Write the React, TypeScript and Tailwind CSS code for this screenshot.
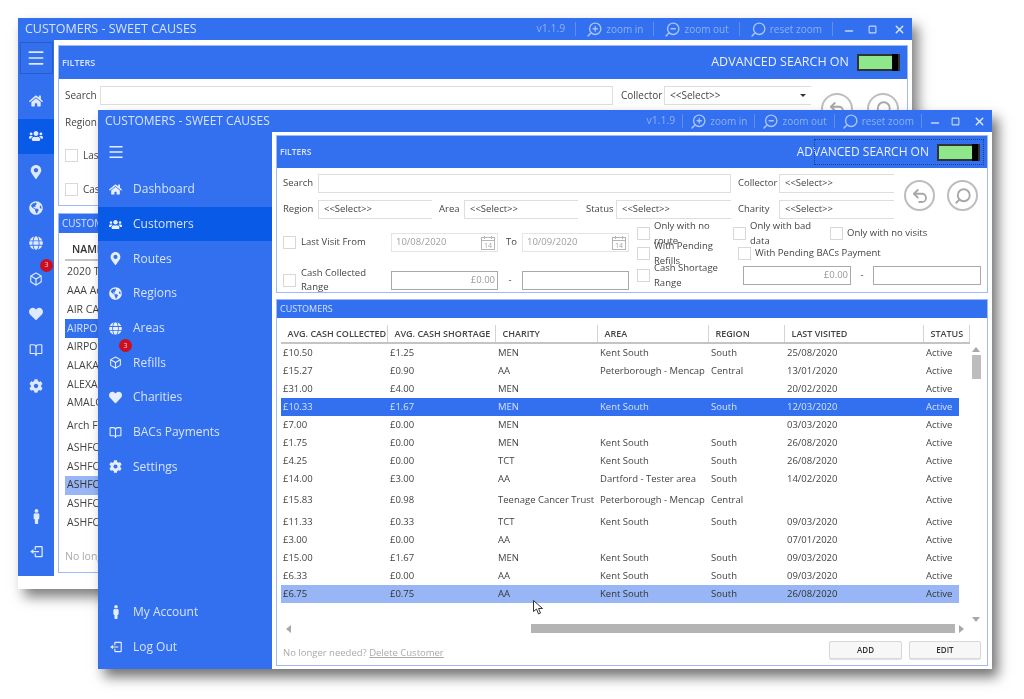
import type { ReactNode } from 'react';
import { Menu, Minus, Search, Square, Undo2, X, ZoomIn, ZoomOut, Box, BookOpen } from 'lucide-react';
import { FaCog, FaGlobe, FaGlobeAmericas, FaHeart, FaHome, FaMale, FaMapMarkerAlt, FaUsers } from 'react-icons/fa';
import { BiLogOut } from 'react-icons/bi';
import type { IconType } from 'react-icons';

const FONT = 'font-["Open_Sans",sans-serif]';

const NAV: { label: string; icon: IconType | typeof Box; active?: boolean; badge?: boolean }[] = [
  { label: 'Dashboard', icon: FaHome },
  { label: 'Customers', icon: FaUsers, active: true },
  { label: 'Routes', icon: FaMapMarkerAlt },
  { label: 'Regions', icon: FaGlobeAmericas },
  { label: 'Areas', icon: FaGlobe },
  { label: 'Refills', icon: Box, badge: true },
  { label: 'Charities', icon: FaHeart },
  { label: 'BACs Payments', icon: BookOpen },
  { label: 'Settings', icon: FaCog },
];

const NAV_BOTTOM = [
  { label: 'My Account', icon: FaMale },
  { label: 'Log Out', icon: BiLogOut },
];

const ROWS = [
  { h: 'h-[18px]', c: ['£10.50', '£1.25', 'MEN', 'Kent South', 'South', '25/08/2020', 'Active'] },
  { h: 'h-[18px]', c: ['£15.27', '£0.90', 'AA', 'Peterborough - Mencap', 'Central', '13/01/2020', 'Active'] },
  { h: 'h-[18px]', c: ['£31.00', '£4.00', 'MEN', '', '', '20/02/2020', 'Active'] },
  { h: 'h-[18px]', sel: 'dark', c: ['£10.33', '£1.67', 'MEN', 'Kent South', 'South', '12/03/2020', 'Active'] },
  { h: 'h-[18px]', c: ['£7.00', '£0.00', 'MEN', '', '', '03/03/2020', 'Active'] },
  { h: 'h-[18px]', c: ['£1.75', '£0.00', 'MEN', 'Kent South', 'South', '26/08/2020', 'Active'] },
  { h: 'h-[18px]', c: ['£4.25', '£0.00', 'TCT', 'Kent South', 'South', '26/08/2020', 'Active'] },
  { h: 'h-[18px]', c: ['£14.00', '£3.00', 'AA', 'Dartford - Tester area', 'South', '14/02/2020', 'Active'] },
  { h: 'h-[25px]', c: ['£15.83', '£0.98', 'Teenage Cancer Trust', 'Peterborough - Mencap', 'Central', '', 'Active'] },
  { h: 'h-[18px]', c: ['£11.33', '£0.33', 'TCT', 'Kent South', 'South', '09/03/2020', 'Active'] },
  { h: 'h-[18px]', c: ['£3.00', '£0.00', 'AA', '', '', '07/01/2020', 'Active'] },
  { h: 'h-[18px]', c: ['£15.00', '£1.67', 'MEN', 'Kent South', 'South', '09/03/2020', 'Active'] },
  { h: 'h-[18px]', c: ['£6.33', '£0.00', 'AA', 'Kent South', 'South', '09/03/2020', 'Active'] },
  { h: 'h-[18px]', sel: 'light', c: ['£6.75', '£0.75', 'AA', 'Kent South', 'South', '26/08/2020', 'Active'] },
];

const HEADERS = [
  { label: 'AVG. CASH COLLECTED', w: 'w-[107px]' },
  { label: 'AVG. CASH SHORTAGE', w: 'w-[108px]' },
  { label: 'CHARITY', w: 'w-[102px]' },
  { label: 'AREA', w: 'w-[111px]' },
  { label: 'REGION', w: 'w-[76px]' },
  { label: 'LAST VISITED', w: 'w-[139px]' },
  { label: 'STATUS', w: 'w-[46px]' },
];

const BACK_NAMES = [
  { name: '2020 TEST', h: 'h-[18.7px]' },
  { name: 'AAA Accounts', h: 'h-[18.7px]' },
  { name: 'AIR CANADA', h: 'h-[18.7px]' },
  { name: 'AIRPORT ONE', h: 'h-[18.7px]', sel: 'dark' },
  { name: 'AIRPORT TWO', h: 'h-[18.7px]' },
  { name: 'ALAKAZAM', h: 'h-[18.7px]' },
  { name: 'ALEXANDER', h: 'h-[18.7px]' },
  { name: 'AMALGAM', h: 'h-[18.7px]' },
  { name: 'Arch Fencing', h: 'h-[26px]' },
  { name: 'ASHFORD A', h: 'h-[18.7px]' },
  { name: 'ASHFORD B', h: 'h-[18.7px]' },
  { name: 'ASHFORD C', h: 'h-[18.7px]', sel: 'light' },
  { name: 'ASHFORD D', h: 'h-[18.7px]' },
  { name: 'ASHFORD E', h: 'h-[18.7px]' },
];

function Sep() {
  return <span className="h-[14px] w-px bg-[#5f8ff2]" />;
}

function ToolButton({ icon, label }: { icon: ReactNode; label: string }) {
  return (
    <span className="flex items-center gap-[3px]">
      {icon}
      <span>{label}</span>
    </span>
  );
}

function TitleBar({ gap, text }: { gap: string; text: string }) {
  const icon = 'size-[17px] -scale-x-100 text-[#a8c3f9]';
  return (
    <div className="flex h-[22px] shrink-0 items-center bg-[#3370f0] pl-[7px] pr-[6px]">
      <span className={`${text} text-[#d5e3fe]`}>CUSTOMERS - SWEET CAUSES</span>
      <div className={`ml-auto flex items-center ${gap} text-[10px] text-[#8fb0f2]`}>
        <span className="text-[10.5px]">v1.1.9</span>
        <Sep />
        <ToolButton icon={<ZoomIn className={icon} strokeWidth={2} />} label="zoom in" />
        <Sep />
        <ToolButton icon={<ZoomOut className={icon} strokeWidth={2} />} label="zoom out" />
        <Sep />
        <ToolButton icon={<Search className={icon} strokeWidth={2} />} label="reset zoom" />
        <Sep />
        <Minus className="size-[12px] translate-y-[2px] text-[#c4d6fb]" strokeWidth={3} />
        <Square className="ml-[3px] size-[9px] text-[#c4d6fb]" strokeWidth={3} />
        <X className="ml-[6px] size-[13px] text-[#dbe7ff]" strokeWidth={2.5} />
      </div>
    </div>
  );
}

function Toggle() {
  return (
    <span className="flex h-[17px] w-[43px] items-center justify-end border-2 border-[#333] bg-[#8ee88b]">
      <span className="h-[17px] w-[6px] shrink-0 bg-black" />
    </span>
  );
}

function Check() {
  return <span className="size-[13px] shrink-0 border border-[#d8d8d8] bg-white" />;
}

function Field({ w, text, right, dim, strong }: { w: string; text?: string; right?: boolean; dim?: boolean; strong?: boolean }) {
  return (
    <span
      className={`flex h-[19px] shrink-0 items-center border px-[5px] ${w} ${strong ? 'border-[#a9a9a9]' : 'border-[#dedede]'} ${right ? 'justify-end pr-[2px]' : ''} ${dim ? 'text-[#9a9a9a]' : 'text-[#555]'}`}
    >
      {text}
    </span>
  );
}

function Select({ w }: { w: string }) {
  return (
    <span className={`flex h-[19px] shrink-0 items-center border border-r-0 border-[#dedede] px-[5px] text-[#444] ${w}`}>
      {'<<Select>>'}
    </span>
  );
}

function DateField({ value }: { value: string }) {
  return (
    <span className="flex h-[19px] w-[107px] shrink-0 items-center justify-between border border-[#e4e4e4] pl-[4px] pr-[2px] text-[#a0a0a0]">
      {value}
      <svg viewBox="0 0 14 14" className="size-[14px]" fill="none" stroke="#b5b5b5">
        <rect x="0.5" y="1.5" width="13" height="12" />
        <path d="M0.5 4.5h13M3.5 0v3M10.5 0v3" />
        <text x="7" y="12" fontSize="7" textAnchor="middle" fill="#a5a5a5" stroke="none">
          14
        </text>
      </svg>
    </span>
  );
}

function RoundButton({ size, children }: { size: string; children: ReactNode }) {
  return (
    <span className={`flex shrink-0 items-center justify-center rounded-full border-2 border-[#bdbdbd] bg-white text-[#a8a8a8] ${size}`}>
      {children}
    </span>
  );
}

function Arrow({ points }: { points: string }) {
  return (
    <svg viewBox="0 0 8 8" className="size-[8px] shrink-0" fill="#a8a8a8">
      <polygon points={points} />
    </svg>
  );
}

function BackWindow() {
  return (
    <div className="absolute left-[18px] top-[18px] flex h-[571px] w-[894px] flex-col bg-white shadow-[6px_8px_12px_rgba(0,0,0,0.5)]">
      <TitleBar gap="gap-[10px]" text="text-[12.5px]" />
      <div className="flex h-[536px]">
        <aside className="relative flex w-[36px] shrink-0 flex-col items-center bg-[#3370f0] text-[#dfe9ff]">
          <div className="mt-[2px] flex h-[32px] w-[33px] items-center justify-center border border-[#2a5cc4]">
            <Menu className="size-[20px]" strokeWidth={2} />
          </div>
          <div className="mt-[9px] flex w-full flex-col">
            {NAV.map(({ label, icon: Icon, active, badge }) => (
              <span key={label} className={`relative flex h-[35.6px] items-center justify-center ${active ? 'bg-[#0a5ae8]' : ''}`}>
                <Icon className="size-[14px]" />
                {badge && (
                  <span className="absolute left-[22px] top-[-2px] flex size-[13px] items-center justify-center rounded-full bg-[#cc0f1e] text-[7px] text-[#f5c8c8]">
                    3
                  </span>
                )}
              </span>
            ))}
          </div>
          <div className="mt-auto mb-[7px] flex w-full flex-col">
            {NAV_BOTTOM.map(({ label, icon: Icon }) => (
              <span key={label} className="flex h-[35px] items-center justify-center">
                <Icon className="size-[15px]" />
              </span>
            ))}
          </div>
        </aside>
        <div className="flex flex-1 flex-col gap-[7px] pl-[4px] pr-[4px] pt-[5px]">
          <section className="h-[161px] border border-[#9dbaf7]">
            <div className="flex h-[33px] items-center bg-[#3370f0] pl-[3px] pr-[7px]">
              <span className="text-[9px] font-semibold text-[#d5e3fe]">FILTERS</span>
              <span className="ml-auto text-[12.5px] text-[#eaf1ff]">ADVANCED SEARCH ON</span>
              <span className="ml-[8px]">
                <Toggle />
              </span>
            </div>
            <div className="flex pl-[6px] pt-[7px] text-[10px] text-[#444]">
              <div className="flex w-[746px] flex-col gap-[8px]">
                <div className="flex items-center">
                  <span className="w-[35px]">Search</span>
                  <Field w="w-[513px]" />
                  <span className="ml-[8px] w-[43px]">Collector</span>
                  <span className="relative">
                    <Select w="w-[147px]" />
                    <span className="absolute right-[5px] top-[8px] size-0 border-x-[3px] border-t-[3px] border-x-transparent border-t-[#333]" />
                  </span>
                </div>
                <div className="flex items-center">
                  <span className="w-[35px]">Region</span>
                  <Select w="w-[120px]" />
                </div>
                <div className="mt-[8px] flex items-center gap-[5px]">
                  <Check />
                  Last Visit From
                </div>
                <div className="mt-[11px] flex items-center gap-[5px]">
                  <Check />
                  Cash Collected Range
                </div>
              </div>
              <div className="ml-[10px] mt-[7px] flex gap-[14px]">
                <RoundButton size="size-[32px]">
                  <Undo2 className="size-[18px]" strokeWidth={2.5} />
                </RoundButton>
                <RoundButton size="size-[32px]">
                  <Search className="size-[18px] -scale-x-100" strokeWidth={2.5} />
                </RoundButton>
              </div>
            </div>
          </section>
          <section className="relative h-[360px] border border-[#9dbaf7] text-[10.5px] text-[#444]">
            <div className="flex h-[19px] items-center bg-[#3370f0] pl-[3px] text-[10px] text-[#d5e3fe]">CUSTOMERS</div>
            <div className="ml-[6px] mt-[9px] h-[19px] w-[200px] border-b-2 border-[#c4c4c4] pl-[7px] font-semibold text-[#333]">NAME</div>
            <div className="ml-[6px] mt-[2px] flex w-[200px] flex-col">
              {BACK_NAMES.map((row) => (
                <span
                  key={row.name}
                  className={`flex items-center pl-[2px] ${row.h} ${row.sel === 'dark' ? 'bg-[#3370f0] text-[#d5e3fe]' : row.sel === 'light' ? 'bg-[#98b6f6] text-[#333]' : ''}`}
                >
                  {row.name}
                </span>
              ))}
            </div>
            <span className="absolute bottom-[7px] left-[6px] text-[#aaa]">No longer needed?</span>
          </section>
        </div>
      </div>
    </div>
  );
}

function FrontWindow() {
  return (
    <div className="absolute left-[98px] top-[110px] flex h-[559px] w-[894px] flex-col bg-white shadow-[6px_8px_12px_rgba(0,0,0,0.55)]">
      <TitleBar gap="gap-[7px]" text="text-[12px]" />
      <div className="flex min-h-0 flex-1">
        <aside className="flex w-[174px] shrink-0 flex-col bg-[#3370f0] text-[12px] text-[#d5e3fe]">
          <div className="flex h-[40px] items-center pl-[9px]">
            <Menu className="size-[18px] text-[#e6eeff]" strokeWidth={2} />
          </div>
          {NAV.map(({ label, icon: Icon, active, badge }) => (
            <div key={label} className={`relative flex h-[34.7px] items-center pl-[11px] ${active ? 'bg-[#0a5ae8]' : ''}`}>
              <Icon className="size-[13px] text-[#e6eeff]" />
              <span className="ml-[11px]">{label}</span>
              {badge && (
                <span className="absolute left-[21px] top-[-6px] flex size-[13px] items-center justify-center rounded-full bg-[#cc0f1e] text-[7px] text-[#f5c8c8]">
                  3
                </span>
              )}
            </div>
          ))}
          <div className="mt-auto mb-[5px]">
            {NAV_BOTTOM.map(({ label, icon: Icon }) => (
              <div key={label} className="flex h-[34.7px] items-center pl-[11px]">
                <Icon className="size-[14px] text-[#e6eeff]" />
                <span className="ml-[10px]">{label}</span>
              </div>
            ))}
          </div>
        </aside>

        <div className="flex min-w-0 flex-1 flex-col pl-[4px] pr-[4px] pt-[3px] text-[9.5px] text-[#444]">
          <section className="h-[158px] shrink-0 border border-[#9dbaf7]">
            <div className="relative flex h-[32px] items-center bg-[#3370f0] pl-[3px] pr-[7px]">
              <span className="text-[8.5px] font-semibold text-[#d5e3fe]">FILTERS</span>
              <span className="ml-auto text-[12px] text-[#eaf1ff]">ADVANCED SEARCH ON</span>
              <span className="ml-[8px]">
                <Toggle />
              </span>
              <span className="absolute bottom-[3px] right-[3px] top-[3px] w-[170px] border border-dotted border-[#1d3f8f]" />
            </div>
            <div className="pl-[6px] pt-[6px]">
              <div className="flex">
                <div className="flex w-[611px] flex-col gap-[7px]">
                  <div className="flex items-center">
                    <span className="w-[35px]">Search</span>
                    <Field w="w-[413px]" />
                    <span className="ml-[7px] w-[41px]">Collector</span>
                    <Select w="w-[115px]" />
                  </div>
                  <div className="flex items-center">
                    <span className="w-[35px]">Region</span>
                    <Select w="w-[114px]" />
                    <span className="ml-[7px] w-[25px]">Area</span>
                    <Select w="w-[114px]" />
                    <span className="ml-[8px] w-[30px]">Status</span>
                    <Select w="w-[115px]" />
                    <span className="ml-[7px] w-[41px]">Charity</span>
                    <Select w="w-[115px]" />
                  </div>
                </div>
                <div className="ml-[10px] mt-[6px] flex gap-[12px]">
                  <RoundButton size="size-[31px]">
                    <Undo2 className="size-[18px]" strokeWidth={2.5} />
                  </RoundButton>
                  <RoundButton size="size-[31px]">
                    <Search className="size-[18px] -scale-x-100" strokeWidth={2.5} />
                  </RoundButton>
                </div>
              </div>
              <div className="mt-[8px] flex">
                <div className="flex w-[346px] flex-col gap-[14px] pt-[6px]">
                  <div className="flex items-center">
                    <Check />
                    <span className="ml-[5px] w-[90px]">Last Visit From</span>
                    <DateField value="10/08/2020" />
                    <span className="w-[24px] pl-[8px]">To</span>
                    <DateField value="10/09/2020" />
                  </div>
                  <div className="flex items-center">
                    <Check />
                    <span className="ml-[5px] w-[90px]">Cash Collected Range</span>
                    <Field w="w-[107px]" text="£0.00" right dim strong />
                    <span className="w-[24px] text-center">-</span>
                    <Field w="w-[107px]" strong />
                  </div>
                </div>
                <div className="ml-[8px] flex flex-col">
                  <div className="flex h-[13px] items-center">
                    <Check />
                    <span className="ml-[4px] w-[79px]">Only with no route</span>
                    <Check />
                    <span className="ml-[4px] w-[80px]">Only with bad data</span>
                    <Check />
                    <span className="ml-[4px]">Only with no visits</span>
                  </div>
                  <div className="mt-[7px] flex h-[13px] items-center">
                    <Check />
                    <span className="ml-[4px] w-[84px]">With Pending Refills</span>
                    <Check />
                    <span className="ml-[4px]">With Pending BACs Payment</span>
                  </div>
                  <div className="mt-[6px] flex h-[19px] items-center">
                    <Check />
                    <span className="ml-[4px] w-[89px]">Cash Shortage Range</span>
                    <Field w="w-[108px]" text="£0.00" right dim strong />
                    <span className="w-[22px] text-center">-</span>
                    <Field w="w-[108px]" strong />
                  </div>
                </div>
              </div>
            </div>
          </section>

          <section className="mt-[6px] flex h-[367px] shrink-0 flex-col border border-[#9dbaf7]">
            <div className="flex h-[18px] shrink-0 items-center bg-[#3370f0] pl-[3px] text-[9px] text-[#d5e3fe]">CUSTOMERS</div>
            <div className="flex pl-[4px] pt-[7px]">
              <div className="w-[689px]">
                <div className="flex h-[19px] border-b-2 border-[#c4c4c4] font-semibold text-[#444]">
                  {HEADERS.map((h) => (
                    <span key={h.label} className={`flex items-center border-r border-[#d4d4d4] pl-[6.5px] text-[9px] ${h.w}`}>
                      {h.label}
                    </span>
                  ))}
                </div>
                <div className="w-[678px]">
                  {ROWS.map((row, i) => (
                    <div
                      key={i}
                      className={`grid grid-cols-[107px_108px_102px_111px_76px_139px_35px] items-center pl-[2px] ${row.h} ${row.sel === 'dark' ? 'bg-[#3370f0] text-[#d5e3fe]' : row.sel === 'light' ? 'bg-[#98b6f6] text-[#333]' : ''}`}
                    >
                      {row.c.map((cell, j) => (
                        <span key={j} className="whitespace-nowrap">
                          {cell}
                        </span>
                      ))}
                    </div>
                  ))}
                </div>
              </div>
              <div className="ml-[1px] mt-[21px] flex h-[277px] w-[10px] flex-col items-center">
                <Arrow points="4,1 8,6 0,6" />
                <span className="mt-[1px] h-[24px] w-[9px] bg-[#bdbdbd]" />
                <span className="mt-auto">
                  <Arrow points="0,2 8,2 4,7" />
                </span>
              </div>
            </div>
            <div className="ml-[4px] mt-[1px] flex h-[9px] items-center">
              <span className="ml-[4px]">
                <Arrow points="6,0 6,8 1,4" />
              </span>
              <span className="ml-[238px] h-[9px] w-[424px] bg-[#b4b4b4]" />
              <span className="ml-[2px]">
                <Arrow points="2,0 2,8 7,4" />
              </span>
            </div>
            <div className="mt-[8px] flex items-end pl-[6px] pr-[6px]">
              <span className="mb-[-1px] text-[#aaa]">
                No longer needed? <span className="underline">Delete Customer</span>
              </span>
              <button className="ml-auto h-[18px] w-[73px] rounded-[2px] border border-[#d8d8d8] bg-[#f7f7f7] text-[8px] font-semibold text-[#333] shadow-[0_1px_1px_rgba(0,0,0,0.12)]">ADD</button>
              <button className="ml-[7px] h-[18px] w-[72px] rounded-[2px] border border-[#d8d8d8] bg-[#f7f7f7] text-[8px] font-semibold text-[#333] shadow-[0_1px_1px_rgba(0,0,0,0.12)]">EDIT</button>
            </div>
          </section>
        </div>
      </div>
      <svg viewBox="0 0 10 15" className="absolute left-[435px] top-[490px] h-[15px] w-[10px]" fill="white" stroke="#333">
        <path d="M0.5 0.5v11l3-2.5 2 5 2-1-2-4.5h4z" />
      </svg>
    </div>
  );
}

export default function App() {
  return (
    <div className={`relative h-[699px] w-[1024px] overflow-hidden bg-white blur-[0.4px] ${FONT}`}>
      <BackWindow />
      <FrontWindow />
    </div>
  );
}
